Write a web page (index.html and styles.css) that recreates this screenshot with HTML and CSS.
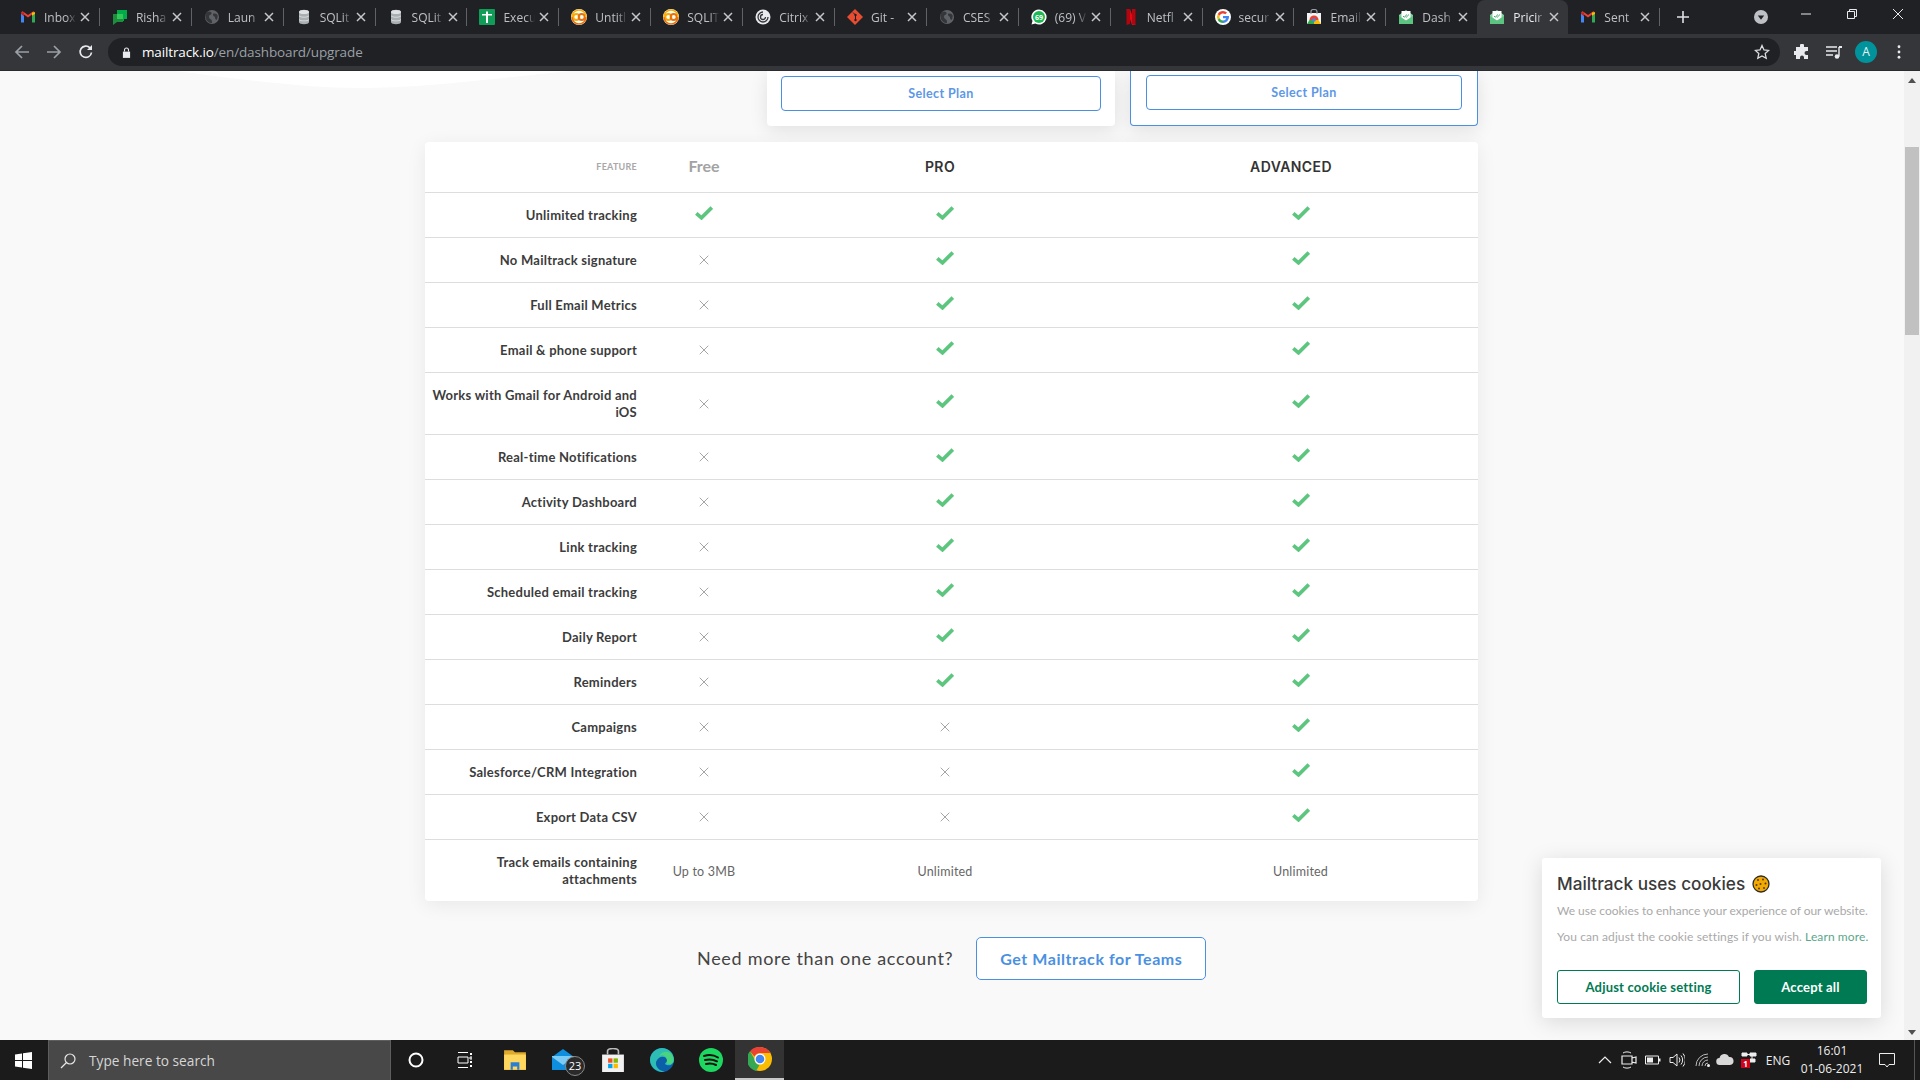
FILE: index.html
```html
<!DOCTYPE html>
<html lang="en">
<head>
<meta charset="utf-8">
<title>Pricing - Mailtrack</title>
<link rel="stylesheet" href="styles.css">
</head>
<body>
<svg class="defs" width="0" height="0" aria-hidden="true">
  <symbol id="i-gmail" viewBox="0 0 16 16">
    <path d="M1 3.2v10.3h3V7z" fill="#4285f4"/><path d="M15 3.2v10.3h-3V7z" fill="#34a853"/>
    <path d="M1 3.2 8 8.6l7-5.4-1.6-1L8 6 2.6 2.2z" fill="#ea4335"/><path d="M12 7V3.4l3-.2v1.6z" fill="#fbbc04"/><path d="M4 7V3.4l-3-.2v1.6z" fill="#c5221f"/>
  </symbol>
  <symbol id="i-chat" viewBox="0 0 16 16">
    <path d="M5 1h10v9h-3v2H5z" fill="#00ac47"/><path d="M1 5h10v8H5l-4 3z" fill="#1e8e3e"/><path d="M5 5h6v5H5z" fill="#34c759"/>
  </symbol>
  <symbol id="i-globe" viewBox="0 0 16 16">
    <circle cx="8" cy="8" r="7" fill="#5f6368"/><path d="M5 2.500c2 0 3 1 2.500 2.500-.5 1-2.500 1-2.500 2.500S6 10 7 10.500s1 2.500 1 3.500c-3 0-6-2-6.500-6S3 3 5 2.500zM10 4.500c1 0 3 0 3.500 1.500s0 4-1 5c-1-.5-1.500-1.500-1.500-2.500S9 7 9 6s0-1.500 1-1.500z" fill="#35363a"/>
  </symbol>
  <symbol id="i-db" viewBox="0 0 16 16">
    <path d="M3 3c0-3 10-3 10 0v10c0 3-10 3-10 0z" fill="#a8aeb2"/><ellipse cx="8" cy="3" rx="5" ry="2" fill="#dfe1e3"/><path d="M3 6.300c1 2 9 2 10 0v.8c-1 2-9 2-10 0zM3 10c1 2 9 2 10 0v.8c-1 2-9 2-10 0z" fill="#e4e6e7"/>
  </symbol>
  <symbol id="i-sheet" viewBox="0 0 16 16">
    <rect width="16" height="16" rx="1" fill="#0f9d58"/><path d="M3 5h4V2.500h2V5h4v1.500H9V14H7V6.500H3z" fill="#fff"/>
  </symbol>
  <symbol id="i-colab" viewBox="0 0 16 16">
    <circle cx="8" cy="8" r="8" fill="#fff"/><circle cx="5.300" cy="8" r="3" fill="none" stroke="#f9ab00" stroke-width="2"/><circle cx="10.700" cy="8" r="3" fill="none" stroke="#e8710a" stroke-width="2"/><path d="M1 8a7 7 0 0 1 14 0" fill="none" stroke="#f9ab00" stroke-width="1.500"/><path d="M1 8a7 7 0 0 0 14 0" fill="none" stroke="#e8710a" stroke-width="1.500"/>
  </symbol>
  <symbol id="i-citrix" viewBox="0 0 16 16">
    <circle cx="8" cy="8" r="7.500" fill="#e8eaed"/><path d="M8 3a5 5 0 1 0 5 5" fill="none" stroke="#35363a" stroke-width="1.300"/><path d="M8 5.500A2.500 2.500 0 1 0 10.500 8" fill="none" stroke="#35363a" stroke-width="1.300"/>
  </symbol>
  <symbol id="i-git" viewBox="0 0 16 16">
    <path d="M8 0 16 8 8 16 0 8z" fill="#e84d31"/><path d="M6 3.500 8.500 6v5" fill="none" stroke="#202124" stroke-width="1"/><circle cx="8.500" cy="6" r="1.200" fill="#202124"/><circle cx="8.500" cy="11" r="1.200" fill="#202124"/>
  </symbol>
  <symbol id="i-netflix" viewBox="0 0 16 16">
    <path d="M3.500 0H7l5.500 16H9z" fill="#e50914"/><path d="M3.500 0H7v15l-3.500 1zM9 0h3.500v16L9 15z" fill="#b1060f"/>
  </symbol>
  <symbol id="i-google" viewBox="0 0 16 16">
    <circle cx="8" cy="8" r="8" fill="#fff"/><path d="M8 7v2.200h3.300A3.500 3.500 0 0 1 8 11.600V14a6 6 0 0 0 6-6l-.1-1z" fill="#4285f4"/><path d="M8 2a6 6 0 0 0-5.300 3.200l2 1.500A3.500 3.500 0 0 1 10.300 5.300L12 3.600A6 6 0 0 0 8 2z" fill="#ea4335"/><path d="M2.700 5.200a6 6 0 0 0 0 5.600l2-1.500a3.500 3.500 0 0 1 0-2.600z" fill="#fbbc04"/><path d="M2.700 10.800A6 6 0 0 0 8 14v-2.400a3.500 3.500 0 0 1-3.300-2.300z" fill="#34a853"/>
  </symbol>
  <symbol id="i-cws" viewBox="0 0 16 16">
    <path d="M1 4h14v11H1z" fill="#f1f3f4"/><path d="M5 5V2.500C5 1 6 .5 8 .5s3 .5 3 2V5" fill="none" stroke="#9aa0a6" stroke-width="1.200"/><path d="M3.500 11a4.500 4.500 0 0 1 9 0z" fill="#ea4335"/><path d="M3.500 11h4.500v4H1z" fill="#34a853"/><path d="M12.500 11H8v4h7z" fill="#fbbc04"/><circle cx="8" cy="11" r="1.800" fill="#4285f4"/>
  </symbol>
  <symbol id="i-mt" viewBox="0 0 16 16">
    <path d="M1 6 8 1l7 5v9H1z" fill="#7ed09a"/><path d="M3.500 2h9v7l-4.500 3-4.500-3z" fill="#fff"/><path d="M5 7l1.200 1.200L9 5.500M7.500 7.800l.7.500 2.800-2.800" fill="none" stroke="#2f9e5f" stroke-width=".9"/><path d="M1 7l7 4.500L15 7v8H1z" fill="#5dc381"/>
  </symbol>
  <symbol id="i-close" viewBox="0 0 10 10">
    <path d="M1 1l8 8M9 1l-8 8" fill="none" stroke="currentColor" stroke-width="1.500"/>
  </symbol>
  <symbol id="i-check" viewBox="0 0 18 14">
    <path d="M1.300 7.300 6.500 11.800 16.800 1.500" fill="none" stroke="#5cc67f" stroke-width="3.700"/>
  </symbol>
  <symbol id="i-x" viewBox="0 0 10 10">
    <path d="M.7.700l8.600 8.600M9.300.700.7 9.300" fill="none" stroke="#a5a5a5" stroke-width="1"/>
  </symbol>
</svg>

<header class="tabstrip">
  <div class="tab sep"><svg class="favicon"><use href="#i-gmail"/></svg><span class="tab-title">Inbox</span><svg class="tab-close"><use href="#i-close"/></svg></div>
  <div class="tab sep"><svg class="favicon"><use href="#i-chat"/></svg><span class="tab-title">Risha</span><svg class="tab-close"><use href="#i-close"/></svg></div>
  <div class="tab sep"><svg class="favicon"><use href="#i-globe"/></svg><span class="tab-title">Laun</span><svg class="tab-close"><use href="#i-close"/></svg></div>
  <div class="tab sep"><svg class="favicon"><use href="#i-db"/></svg><span class="tab-title">SQLit</span><svg class="tab-close"><use href="#i-close"/></svg></div>
  <div class="tab sep"><svg class="favicon"><use href="#i-db"/></svg><span class="tab-title">SQLit</span><svg class="tab-close"><use href="#i-close"/></svg></div>
  <div class="tab sep"><svg class="favicon"><use href="#i-sheet"/></svg><span class="tab-title">Execu</span><svg class="tab-close"><use href="#i-close"/></svg></div>
  <div class="tab sep"><svg class="favicon"><use href="#i-colab"/></svg><span class="tab-title">Untitl</span><svg class="tab-close"><use href="#i-close"/></svg></div>
  <div class="tab sep"><svg class="favicon"><use href="#i-colab"/></svg><span class="tab-title">SQLIT</span><svg class="tab-close"><use href="#i-close"/></svg></div>
  <div class="tab sep"><svg class="favicon"><use href="#i-citrix"/></svg><span class="tab-title">Citrix</span><svg class="tab-close"><use href="#i-close"/></svg></div>
  <div class="tab sep"><svg class="favicon"><use href="#i-git"/></svg><span class="tab-title">Git -</span><svg class="tab-close"><use href="#i-close"/></svg></div>
  <div class="tab sep"><svg class="favicon"><use href="#i-globe"/></svg><span class="tab-title">CSES</span><svg class="tab-close"><use href="#i-close"/></svg></div>
  <div class="tab sep"><svg class="favicon" viewBox="0 0 16 16"><path d="M8 .5a7.500 7.500 0 1 1-3.700 14L.5 15.500l1-3.600A7.500 7.500 0 0 1 8 .5z" fill="#fff"/><circle cx="8" cy="8" r="6" fill="#1db954"/><text x="8" y="10.500" class="wa-num">69</text></svg><span class="tab-title">(69) V</span><svg class="tab-close"><use href="#i-close"/></svg></div>
  <div class="tab sep"><svg class="favicon"><use href="#i-netflix"/></svg><span class="tab-title">Netfl</span><svg class="tab-close"><use href="#i-close"/></svg></div>
  <div class="tab sep"><svg class="favicon"><use href="#i-google"/></svg><span class="tab-title">secur</span><svg class="tab-close"><use href="#i-close"/></svg></div>
  <div class="tab sep"><svg class="favicon"><use href="#i-cws"/></svg><span class="tab-title">Email</span><svg class="tab-close"><use href="#i-close"/></svg></div>
  <div class="tab narrow"><svg class="favicon"><use href="#i-mt"/></svg><span class="tab-title">Dash</span><svg class="tab-close"><use href="#i-close"/></svg></div>
  <div class="tab narrow active"><svg class="favicon"><use href="#i-mt"/></svg><span class="tab-title">Pricir</span><svg class="tab-close"><use href="#i-close"/></svg></div>
  <div class="tab sep"><svg class="favicon"><use href="#i-gmail"/></svg><span class="tab-title">Sent</span><svg class="tab-close"><use href="#i-close"/></svg></div>
  <svg class="newtab" viewBox="0 0 12 12"><path d="M6 0v12M0 6h12" stroke="#dee1e6" stroke-width="1.600"/></svg>
  <div class="window-controls">
    <svg class="tabsearch" viewBox="0 0 14 14"><circle cx="7" cy="7" r="7" fill="#bdc1c6"/><path d="M3.800 5.500h6.400L7 9.800z" fill="#202124"/></svg>
    <svg class="winbtn" viewBox="0 0 10 10"><path d="M0 5h10" stroke="#e8eaed"/></svg>
    <svg class="winbtn" viewBox="0 0 10 10"><path d="M.5 2.500h7v7h-7zM2.500 2.500V.5h7v7h-2" fill="none" stroke="#e8eaed"/></svg>
    <svg class="winbtn" viewBox="0 0 10 10"><path d="M0 0l10 10M10 0 0 10" stroke="#e8eaed"/></svg>
  </div>
</header>

<nav class="toolbar">
  <svg class="navicon dim" viewBox="0 0 16 16"><path d="M15 8H2M8 2 2 8l6 6" fill="none" stroke="#9aa0a6" stroke-width="1.700"/></svg>
  <svg class="navicon dim" viewBox="0 0 16 16"><path d="M1 8h13M8 2l6 6-6 6" fill="none" stroke="#9aa0a6" stroke-width="1.700"/></svg>
  <svg class="navicon" viewBox="0 0 16 16"><path d="M13.500 8.500A5.700 5.700 0 1 1 12 3.800" fill="none" stroke="#e8eaed" stroke-width="1.700"/><path d="M14 1v5H9z" fill="#e8eaed"/></svg>
  <div class="omnibox">
    <svg class="lock" viewBox="0 0 10 12"><path d="M1 5h8v7H1z" fill="#e8eaed"/><path d="M2.800 5V3.200a2.200 2.200 0 0 1 4.400 0V5" fill="none" stroke="#e8eaed" stroke-width="1.200"/></svg>
    <span class="url"><b class="host">mailtrack.io</b>/en/dashboard/upgrade</span>
    <svg class="star" viewBox="0 0 16 16"><path d="M8 1.500l2 4.400 4.700.5-3.500 3.200 1 4.700L8 12l-4.200 2.300 1-4.700L1.300 6.400 6 5.900z" fill="none" stroke="#dadce0" stroke-width="1.300"/></svg>
  </div>
  <div class="toolbar-right">
    <svg class="tool" viewBox="0 0 16 16"><path d="M6 1.500a2 2 0 0 1 4 0V3h4v4h-1.500a2 2 0 0 0 0 4H14v4H10v-1.500a2 2 0 0 0-4 0V15H2v-4H.8a2 2 0 0 1 0-4H2V3h4z" fill="#e8eaed"/></svg>
    <svg class="tool" viewBox="0 0 16 16"><path d="M0 3h11M0 7h11M0 11h7" stroke="#e8eaed" stroke-width="1.400"/><path d="M13 3v9.500" stroke="#e8eaed" stroke-width="1.400"/><circle cx="11" cy="12.500" r="2.300" fill="#e8eaed"/><path d="M13 2h3v2h-3z" fill="#e8eaed"/></svg>
    <span class="avatar">A</span>
    <svg class="dots" viewBox="0 0 4 16"><circle cx="2" cy="2" r="1.600" fill="#e8eaed"/><circle cx="2" cy="8" r="1.600" fill="#e8eaed"/><circle cx="2" cy="14" r="1.600" fill="#e8eaed"/></svg>
  </div>
</nav>

<div class="viewport">
  <main class="page">
    <svg class="curve" viewBox="0 0 600 20" aria-hidden="true"><path d="M175 0C240 8 300 17 360 17 420 17 480 9 570 0z" fill="#fff"/></svg>
    <section class="plans">
      <div class="plan-card"><a class="select-btn">Select Plan</a></div>
      <div class="plan-card featured"><a class="select-btn">Select Plan</a></div>
    </section>

    <section class="compare">
      <div class="row head">
        <div class="label feature-h">FEATURE</div>
        <div class="h-free">Free</div>
        <div class="h-pro">PRO</div>
        <div class="h-adv">ADVANCED</div>
      </div>
      <div class="row"><div class="label">Unlimited tracking</div><svg class="check"><use href="#i-check"/></svg><svg class="check"><use href="#i-check"/></svg><svg class="check"><use href="#i-check"/></svg></div>
      <div class="row"><div class="label">No Mailtrack signature</div><svg class="cross"><use href="#i-x"/></svg><svg class="check"><use href="#i-check"/></svg><svg class="check"><use href="#i-check"/></svg></div>
      <div class="row"><div class="label">Full Email Metrics</div><svg class="cross"><use href="#i-x"/></svg><svg class="check"><use href="#i-check"/></svg><svg class="check"><use href="#i-check"/></svg></div>
      <div class="row"><div class="label">Email &amp; phone support</div><svg class="cross"><use href="#i-x"/></svg><svg class="check"><use href="#i-check"/></svg><svg class="check"><use href="#i-check"/></svg></div>
      <div class="row tall"><div class="label">Works with Gmail for Android and iOS</div><svg class="cross"><use href="#i-x"/></svg><svg class="check"><use href="#i-check"/></svg><svg class="check"><use href="#i-check"/></svg></div>
      <div class="row"><div class="label">Real-time Notifications</div><svg class="cross"><use href="#i-x"/></svg><svg class="check"><use href="#i-check"/></svg><svg class="check"><use href="#i-check"/></svg></div>
      <div class="row"><div class="label">Activity Dashboard</div><svg class="cross"><use href="#i-x"/></svg><svg class="check"><use href="#i-check"/></svg><svg class="check"><use href="#i-check"/></svg></div>
      <div class="row"><div class="label">Link tracking</div><svg class="cross"><use href="#i-x"/></svg><svg class="check"><use href="#i-check"/></svg><svg class="check"><use href="#i-check"/></svg></div>
      <div class="row"><div class="label">Scheduled email tracking</div><svg class="cross"><use href="#i-x"/></svg><svg class="check"><use href="#i-check"/></svg><svg class="check"><use href="#i-check"/></svg></div>
      <div class="row"><div class="label">Daily Report</div><svg class="cross"><use href="#i-x"/></svg><svg class="check"><use href="#i-check"/></svg><svg class="check"><use href="#i-check"/></svg></div>
      <div class="row"><div class="label">Reminders</div><svg class="cross"><use href="#i-x"/></svg><svg class="check"><use href="#i-check"/></svg><svg class="check"><use href="#i-check"/></svg></div>
      <div class="row"><div class="label">Campaigns</div><svg class="cross"><use href="#i-x"/></svg><svg class="cross"><use href="#i-x"/></svg><svg class="check"><use href="#i-check"/></svg></div>
      <div class="row"><div class="label">Salesforce/CRM Integration</div><svg class="cross"><use href="#i-x"/></svg><svg class="cross"><use href="#i-x"/></svg><svg class="check"><use href="#i-check"/></svg></div>
      <div class="row"><div class="label">Export Data CSV</div><svg class="cross"><use href="#i-x"/></svg><svg class="cross"><use href="#i-x"/></svg><svg class="check"><use href="#i-check"/></svg></div>
      <div class="row tall"><div class="label">Track emails containing attachments</div><div class="val">Up to 3MB</div><div class="val">Unlimited</div><div class="val">Unlimited</div></div>
    </section>

    <section class="teams">
      <span class="teams-q">Need more than one account?</span>
      <a class="teams-btn">Get Mailtrack for Teams</a>
    </section>

    <aside class="cookie">
      <h2 class="cookie-title">Mailtrack uses cookies
        <svg class="cookie-ico" viewBox="0 0 18 18"><circle cx="9" cy="9" r="8" fill="#f2a900" stroke="#2b2b2b" stroke-width="1.300"/><g fill="#5a3a10"><circle cx="6" cy="5" r="1"/><circle cx="11" cy="4.500" r="1"/><circle cx="13.500" cy="8.500" r="1"/><circle cx="8.500" cy="9" r="1"/><circle cx="4.500" cy="10" r="1"/><circle cx="7" cy="13.500" r="1"/><circle cx="12" cy="13" r="1"/></g></svg>
      </h2>
      <p class="cookie-text tight">We use cookies to enhance your experience of our website.</p>
      <p class="cookie-text">You can adjust the cookie settings if you wish. <a class="learn">Learn more.</a></p>
      <div class="cookie-actions">
        <a class="ck-btn ck-outline">Adjust cookie setting</a>
        <a class="ck-btn ck-solid">Accept all</a>
      </div>
    </aside>
  </main>
  <div class="scrollbar">
    <span class="arrow up"></span>
    <span class="thumb"></span>
    <span class="arrow down"></span>
  </div>
</div>

<footer class="taskbar">
  <svg class="winlogo" viewBox="0 0 17 17"><path d="M0 2.400 7 1.400v6.600H0zM8 1.200 17 0v8H8zM0 9h7v6.600L0 14.600zM8 9h9v8l-9-1.200z" fill="#fff"/></svg>
  <div class="searchbox">
    <svg class="search-ico" viewBox="0 0 16 16"><circle cx="10" cy="6" r="5" fill="none" stroke="#e8e8e8" stroke-width="1.200"/><path d="M6.500 9.500 1 15" stroke="#e8e8e8" stroke-width="1.200"/></svg>
    <span>Type here to search</span>
  </div>
  <div class="task-apps">
    <div class="task"><svg class="t-ico cortana" viewBox="0 0 16 16"><circle cx="8" cy="8" r="6.500" fill="none" stroke="#fff" stroke-width="2"/></svg></div>
    <div class="task"><svg class="t-ico" viewBox="0 0 16 16"><path d="M2 .5h10M2 15.500h10M2 5h10v6H2zM14 5h2v2h-2z" fill="none" stroke="#fff"/><path d="M14 9h2v2h-2zM14 1h2v2h-2zM14 13h2v2h-2z" fill="#fff"/></svg></div>
    <div class="task"><svg class="t-ico big" viewBox="0 0 22 22"><path d="M1 2h8l2 2h10v16H1z" fill="#e0a92b"/><path d="M1 6h20v14H1z" fill="#ffd75e"/><path d="M7 13h8v7h-2v-3H9v3H7z" fill="#2a7fd4"/></svg></div>
    <div class="task"><svg class="t-ico big" viewBox="0 0 24 24"><path d="M0 9 11 1l11 8v13H0z" fill="#0f8ee0"/><path d="M0 9l11 8 11-8v-1H0z" fill="#7ccbf5"/></svg><span class="mail-badge">23</span></div>
    <div class="task"><svg class="t-ico big" viewBox="0 0 22 22"><path d="M1 6h20v16H1z" fill="#f1f1f1"/><path d="M6 6V3c0-2 2-2.500 5-2.500s5 .5 5 2.500v3" fill="none" stroke="#bbb" stroke-width="1.500"/><path d="M6.500 9.500h4v4h-4z" fill="#f25022"/><path d="M11.500 9.500h4v4h-4z" fill="#7fba00"/><path d="M6.500 14.500h4v4h-4z" fill="#00a4ef"/><path d="M11.500 14.500h4v4h-4z" fill="#ffb900"/></svg></div>
    <div class="task"><svg class="t-ico big" viewBox="0 0 24 24"><circle cx="12" cy="12" r="12" fill="#0a5fa8"/><path d="M12 0a12 12 0 0 1 12 12c0 4-4 6-7 5s-2-2 0-3c1-4-3-6-6-5S4 14 7 19c1 2 4 4 8 5C7 25 0 19 0 12 0 5 6 0 12 0z" fill="#2ebdb5"/><path d="M22 7c3 5 1 10-3 9-3 0-3-2-2-3 0-5-4-7-8-5 3-5 10-6 13-1z" fill="#49d480"/></svg></div>
    <div class="task"><svg class="t-ico big" viewBox="0 0 24 24"><circle cx="12" cy="12" r="12" fill="#1ed760"/><path d="M5 8c5-1.500 10-1 14 1.500M6 12c4-1 8-.8 12 1.300M7 16c3-.8 7-.6 10 1" fill="none" stroke="#111" stroke-width="2" stroke-linecap="round"/></svg></div>
    <div class="task running"><svg class="t-ico big" viewBox="0 0 24 24"><circle cx="12" cy="12" r="12" fill="#fbbc04"/><path d="M12 0a12 12 0 0 1 10.400 6H12a6 6 0 0 0-5.500 3.500L2 4.200A12 12 0 0 1 12 0z" fill="#ea4335"/><path d="M2 4.200 6.500 12a6 6 0 0 0 5 5.900L8 24A12 12 0 0 1 2 4.200z" fill="#34a853"/><circle cx="12" cy="12" r="5.500" fill="#fff"/><circle cx="12" cy="12" r="4.300" fill="#4285f4"/></svg></div>
  </div>
  <div class="tray">
    <svg class="tray-ico chev" viewBox="0 0 14 8"><path d="M1 7l6-6 6 6" fill="none" stroke="#eee" stroke-width="1.200"/></svg>
    <svg class="tray-ico" viewBox="0 0 16 18"><path d="M1 5h10v8H1zM11 7l4-1v6l-4-1z" fill="none" stroke="#eee" stroke-width="1.200"/><path d="M2 2c2-1.500 6-1.500 8 0M2 16c2 1.500 6 1.500 8 0" fill="none" stroke="#eee"/></svg>
    <svg class="tray-ico" viewBox="0 0 16 18"><path d="M.5 5h13v8H.5z" fill="none" stroke="#eee"/><path d="M2 6.500h6v5H2z" fill="#eee"/><path d="M14 7.500h1.500v3H14z" fill="#eee"/></svg>
    <svg class="tray-ico" viewBox="0 0 16 18"><path d="M1 6.500h3L8 3v12l-4-3.500H1z" fill="none" stroke="#eee"/><path d="M10 6.500a4 4 0 0 1 0 5M12 4.500a7 7 0 0 1 0 9M14 2.500a10 10 0 0 1 0 13" fill="none" stroke="#eee"/></svg>
    <svg class="tray-ico wifi" viewBox="0 0 16 18"><path d="M1 15A12 12 0 0 1 13 3M4 15a9 9 0 0 1 9-9M7 15a6 6 0 0 1 6-6M10 15a3 3 0 0 1 3-3" fill="none" stroke="#bbb"/><circle cx="13.500" cy="14.500" r="1.500" fill="#eee"/></svg>
    <svg class="tray-ico wide" viewBox="0 0 18 14"><path d="M4 12a3.500 3.500 0 0 1-.5-7 5 5 0 0 1 9.500-1 4 4 0 0 1 1 8z" fill="#d8d8d8"/></svg>
    <svg class="tray-ico" viewBox="0 0 16 18"><path d="M1 2h5v3H1zM9 2h6v3H9zM9 8h5v3H9zM6 3.500h3M11 5v3" fill="#eee" stroke="#eee"/><path d="M0 8h9v9H0z" fill="#d0021b"/><text x="4.500" y="15.500" class="tray-num">1</text></svg>
    <span class="lang">ENG</span>
    <div class="clock"><span>16:01</span><span>01-06-2021</span></div>
    <svg class="notif" viewBox="0 0 16 16"><path d="M.5 1.500h15v11H10L8 15l-2-2.500H.5z" fill="none" stroke="#eee"/></svg>
    <span class="showdesk"></span>
  </div>
</footer>
</body>
</html>
```
FILE: styles.css
```css
* { box-sizing: border-box; }
html, body { margin: 0; height: 100%; }
body {
  width: 1920px;
  height: 1080px;
  overflow: hidden;
  display: flex;
  flex-direction: column;
  font-family: "Lato", "Open Sans", sans-serif;
  background: #f9f9f9;
}
.defs { position: absolute; }

/* browser tab strip */
.tabstrip {
  height: 34px;
  flex: none;
  display: flex;
  align-items: stretch;
  padding-left: 8px;
  background: #202124;
  font-family: "Open Sans", sans-serif;
}
.tab {
  flex: 0 0 91.9px;
  display: flex;
  align-items: center;
  padding-left: 12px;
  color: #bdc1c6;
  position: relative;
}
.tab.narrow { flex-basis: 91px; }
.tab.sep::after {
  content: "";
  position: absolute;
  right: 0;
  top: 8px;
  width: 1px;
  height: 18px;
  background: #5f6368;
}
.tab.active {
  background: #35363a;
  border-radius: 8px 8px 0 0;
  color: #e8eaed;
}
.favicon { width: 16px; height: 16px; flex: none; }
.tab-title {
  width: 32px;
  margin-left: 8px;
  font-size: 12px;
  white-space: nowrap;
  -webkit-mask-image: linear-gradient(90deg, #000 70%, transparent 100%);
  mask-image: linear-gradient(90deg, #000 70%, transparent 100%);
}
.tab-close { width: 10px; height: 10px; margin-left: 4px; color: #c4c7cb; flex: none; }
.wa-num { font: 700 7px "Open Sans", sans-serif; fill: #fff; text-anchor: middle; }
.newtab { width: 12px; height: 12px; align-self: center; margin-left: 17px; }
.window-controls { display: flex; align-items: center; margin-left: 65px; }
.tabsearch { width: 14px; height: 14px; }
.winbtn { width: 10px; height: 10px; margin-left: 36px; margin-top: -6px; }
.tabsearch + .winbtn { margin-left: 33px; }

/* toolbar */
.toolbar {
  height: 37px;
  flex: none;
  display: flex;
  align-items: center;
  padding: 0 14px;
  background: #35363a;
  border-bottom: 1px solid #2a2b2e;
}
.navicon { width: 16px; height: 16px; margin-right: 16px; }
.omnibox {
  width: 1672px;
  margin-left: -2px;
  height: 28px;
  border-radius: 14px;
  background: #202124;
  display: flex;
  align-items: center;
  padding: 0 11px 0 14px;
  font-family: "Open Sans", sans-serif;
  font-size: 13.5px;
  color: #9aa0a6;
}
.lock { width: 9px; height: 11px; margin-right: 11px; }
.url { flex: 1; letter-spacing: -.13px; }
.host { font-weight: 400; color: #fff; }
.star { width: 16px; height: 16px; margin-right: -1px; }
.toolbar-right { display: flex; align-items: center; margin-left: 14px; }
.tool { width: 16px; height: 16px; margin-right: 16px; }
.tool + .tool { margin-right: 13px; }
.avatar {
  width: 22px; height: 22px; border-radius: 50%;
  background: #00939c;
  color: #e8f4f5;
  font: 400 12px/22px "Open Sans", sans-serif;
  text-align: center;
}
.dots { width: 4px; height: 14px; margin-left: 20px; }

/* page */
.viewport { flex: 1; display: flex; min-height: 0; position: relative; }
.page { flex: 1; min-width: 0; padding-left: 425px; position: relative; overflow: hidden; background: #f9f9f9; }
.curve { position: absolute; left: 0; top: 0; width: 600px; height: 20px; }
.plans { width: 1053px; padding-left: 342px; display: flex; gap: 15px; position: relative; }
.plan-card {
  flex: 0 0 348px;
  height: 55px;
  padding: 5px 14px 0;
  background: #fff;
  border-radius: 0 0 4px 4px;
  box-shadow: 0 4px 18px rgba(0,0,0,.1);
}
.plan-card.featured { border: 1px solid #4a90e2; border-top: 0; padding: 4px 15px 0; }
.select-btn {
  display: block;
  height: 35px;
  border: 1px solid #4a90e2;
  border-radius: 4px;
  background: #fff;
  color: #5d97e6;
  font-size: 12.5px;
  font-weight: 700;
  letter-spacing: .4px;
  line-height: 34px;
  text-align: center;
}
.compare {
  width: 1053px;
  margin-top: 16px;
  background: #fff;
  border-radius: 4px;
  box-shadow: 0 4px 20px rgba(0,0,0,.07);
  position: relative;
}
.row {
  display: grid;
  grid-template-columns: 220px 118px 364px 347px;
  align-items: center;
  justify-items: center;
  height: 45px;
  border-top: 1px solid #ddd;
}
.row.tall { height: 62px; }
.row.head { height: 50px; border-top: 0; padding-bottom: 2px; }
.label {
  justify-self: stretch;
  padding: 0 8px 0 2px;
  text-align: right;
  font-size: 13px;
  font-weight: 700;
  line-height: 17px;
  letter-spacing: .25px;
  color: #3c3c3c;
}
.feature-h { font-size: 9px; letter-spacing: .25px; color: #a8a8a8; }
.h-free { font-size: 16px; font-weight: 700; color: #a3a3a3; line-height: 18px; margin-top: -1px; }
.h-pro, .h-adv { font: 600 14px "Inter", sans-serif; color: #333; letter-spacing: .4px; }
.h-pro { margin-right: 10px; }
.h-adv { margin-right: 19px; }
.check { width: 18px; height: 14px; margin-top: -5px; }
.cross { width: 10px; height: 10px; }
.val { font-size: 12.5px; color: #666; letter-spacing: .2px; margin-top: 1px; }

.teams {
  width: 1053px;
  margin-top: 36px;
  padding-left: 272px;
  display: flex;
  align-items: center;
  gap: 23px;
  height: 43px;
}
.teams-q { font-size: 18px; color: #444; letter-spacing: .7px; margin-top: -2px; }
.teams-btn {
  width: 230px;
  height: 43px;
  border: 1px solid #4a90e2;
  border-radius: 5px;
  background: #fff;
  color: #4a90e2;
  font-size: 16px;
  font-weight: 700;
  line-height: 41px;
  text-align: center;
  letter-spacing: .55px;
}

/* cookie popup */
.cookie {
  position: absolute;
  left: 1542px;
  top: 787px;
  width: 339px;
  height: 160px;
  padding: 15px 14px 0 15px;
  background: #fff;
  border-radius: 3px;
  box-shadow: 0 4px 22px rgba(0,0,0,.13);
}
.cookie-title {
  margin: 0;
  display: flex;
  align-items: center;
  gap: 7px;
  font: 500 17.2px/22px "Inter", sans-serif;
  color: #3a3a3a;
}
.cookie-ico { width: 18px; height: 18px; }
.cookie-text { margin: 0; height: 26px; line-height: 26px; font-size: 12px; color: #a9a9a9; letter-spacing: .1px; white-space: nowrap; }
.cookie-text.tight { letter-spacing: -.02px; }
.cookie-title + .cookie-text { margin-top: 3px; }
.learn { color: #5aa78a; }
.cookie-actions { display: flex; gap: 14px; margin-top: 20px; }
.ck-btn {
  height: 34px;
  border-radius: 3px;
  font-size: 13px;
  font-weight: 700;
  line-height: 32px;
  text-align: center;
  letter-spacing: .2px;
  border: 1px solid #007a53;
}
.ck-outline { width: 183px; color: #007a53; background: #fff; }
.ck-solid { width: 113px; color: #fff; background: #007a53; }

/* scrollbar */
.scrollbar { flex: 0 0 16px; background: #f1f1f1; display: flex; flex-direction: column; align-items: center; position: relative; }
.arrow { width: 0; height: 0; border-left: 4px solid transparent; border-right: 4px solid transparent; }
.arrow.up { border-bottom: 5px solid #505050; margin-top: 7px; }
.arrow.down { border-top: 5px solid #505050; margin-top: auto; margin-bottom: 5px; }
.thumb { width: 14px; height: 188px; margin-top: 64px; background: #c1c1c1; }

/* windows taskbar */
.taskbar {
  height: 40px;
  flex: none;
  display: flex;
  align-items: stretch;
  background: #1b1b1b;
  color: #eee;
  font-family: "Open Sans", sans-serif;
}
.winlogo { width: 17px; height: 17px; margin: 12px 16px 0 15px; }
.searchbox {
  width: 343px;
  display: flex;
  align-items: center;
  padding-left: 11px;
  background: #484848;
  border: 1px solid #5e5e5e;
  border-bottom: 0;
  color: #d6d6d6;
  font-size: 13.7px;
}
.search-ico { width: 16px; height: 16px; margin-right: 13px; }
.task-apps { display: flex; margin-left: 1px; }
.task { width: 49px; display: flex; align-items: center; justify-content: center; position: relative; }
.task:nth-child(1) { width: 48.5px; }
.task:nth-child(2) { width: 46px; margin-right: 3.5px; }
.t-ico { width: 16px; height: 16px; }
.t-ico.big { width: 24px; height: 24px; }
.mail-badge {
  position: absolute;
  right: 3px;
  bottom: 4px;
  width: 20px;
  height: 20px;
  border-radius: 50%;
  background: #2a2a2a;
  border: 1px solid #888;
  color: #fff;
  font-size: 11px;
  line-height: 18px;
  text-align: center;
}
.task.running { background: #333; border-bottom: 2px solid #c8c8c8; }
.tray { margin-left: auto; display: flex; align-items: center; }
.tray-ico { width: 16px; height: 18px; display: block; margin: 0 4px; flex: none; }
.tray-ico.chev { width: 14px; height: 8px; margin: 0 5px; }
.tray-ico.wifi { margin-left: 6px; }
.tray-ico.wide { width: 18px; height: 14px; margin: 0 3px 0 1px; }
.tray-num { font: 700 8px "Open Sans", sans-serif; fill: #fff; text-anchor: middle; }
.lang { width: 30px; text-align: center; font-size: 12px; margin-left: 2px; }
.clock { display: flex; flex-direction: column; align-items: center; font-size: 12px; line-height: 18px; width: 66px; margin-left: 6px; }
.notif { width: 16px; height: 16px; margin-left: 14px; }
.showdesk { width: 6px; height: 40px; margin-left: 19px; border-left: 1px solid #555; }
```
